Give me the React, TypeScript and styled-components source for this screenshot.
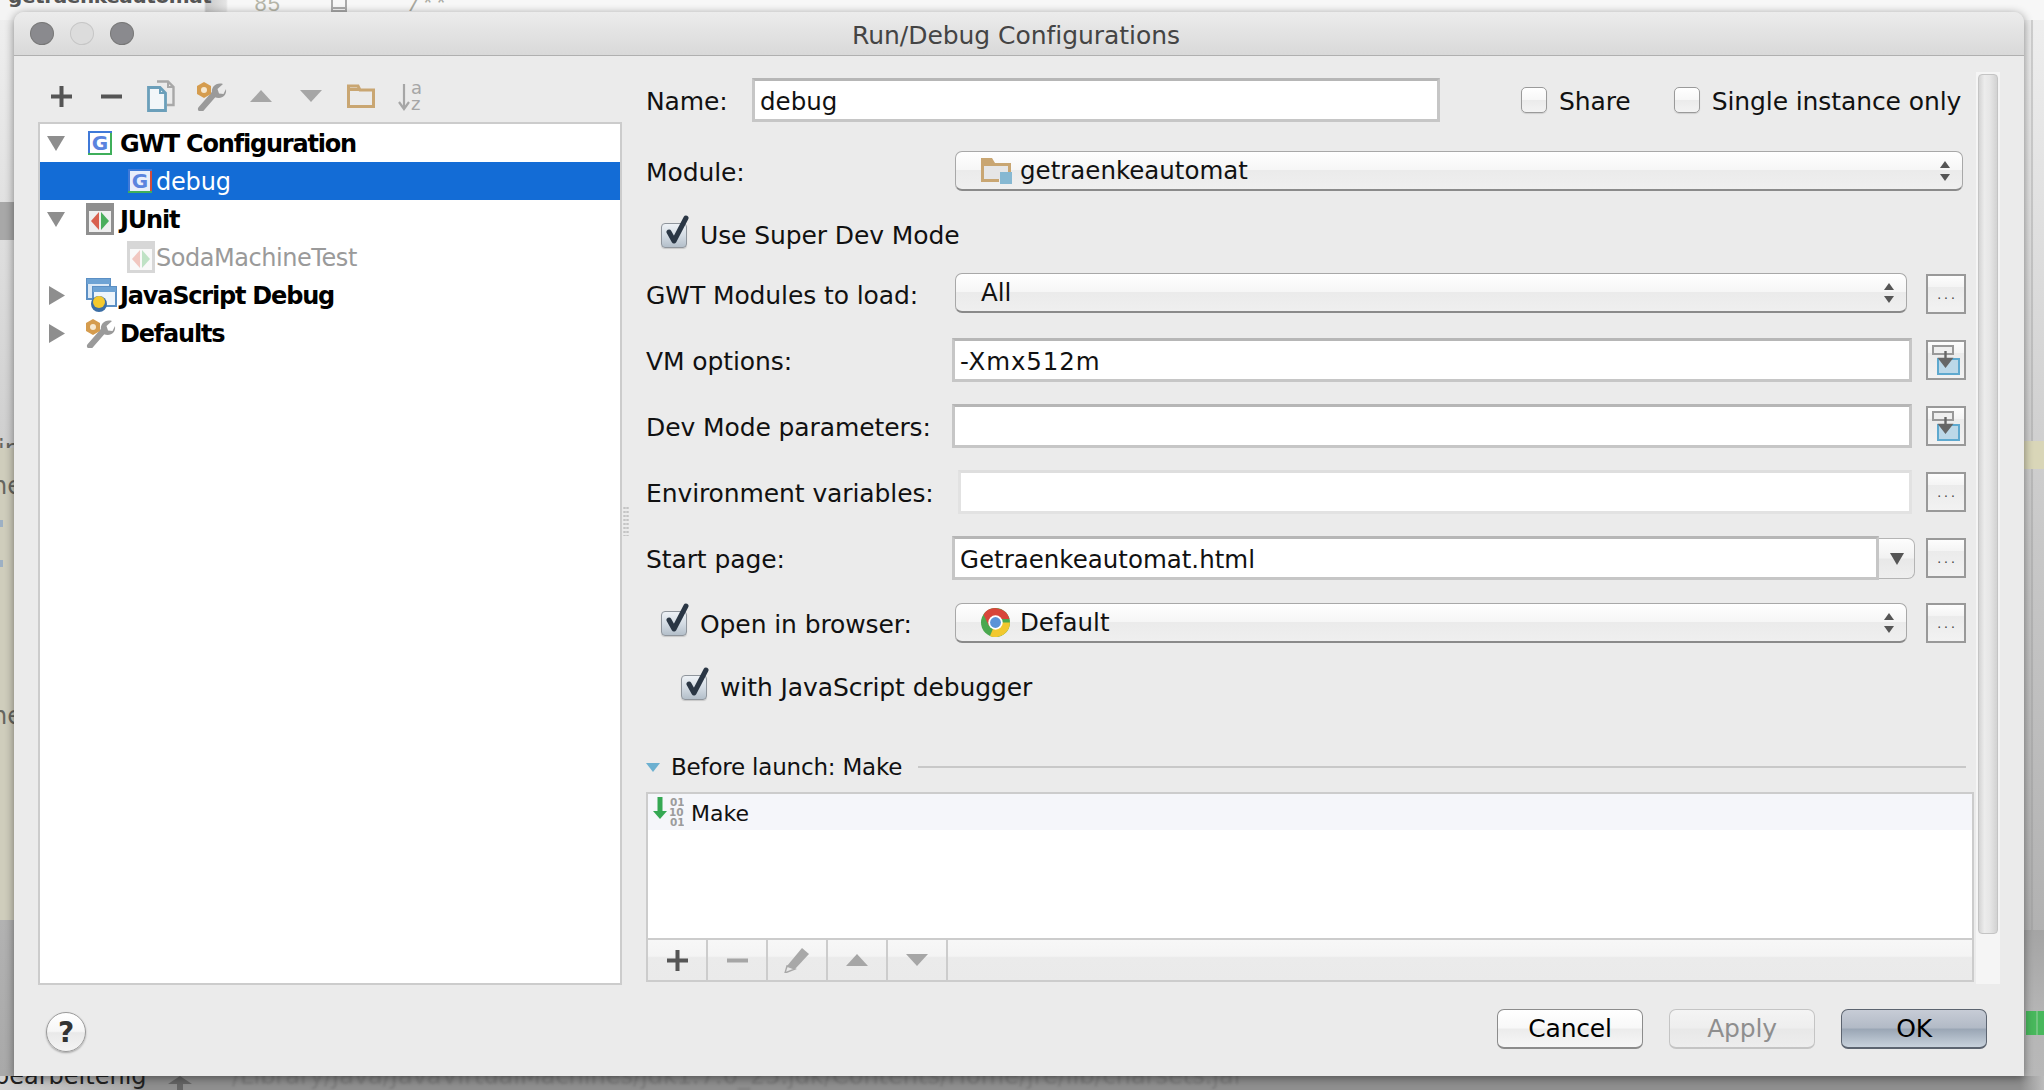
import React from "react";
import styled, { createGlobalStyle } from "styled-components";

const Global = createGlobalStyle`
  html, body { margin: 0; padding: 0; background: #9a9a9a; }
  * { box-sizing: border-box; }
`;

const Desktop = styled.div`
  position: relative;
  width: 2044px;
  height: 1090px;
  overflow: hidden;
  background: linear-gradient(180deg, #f0f0f0 0%, #c8c8c8 50%, #a8a8a8 100%);
  font-family: "DejaVu Sans", sans-serif;
  font-size: 25px;
  color: #111;
`;

/* The IDE window that lies behind the dialog */
const Backdrop = styled.div`
  width: 2044px;
  height: 1090px;
  display: grid;
  grid-template-columns: 14px 1fr 20px;
  grid-template-rows: 20px 1fr 14px;
`;
const TopEditor = styled.div`
  grid-column: 1 / 4;
  display: flex;
  align-items: flex-end;
  overflow: hidden;
  background: linear-gradient(90deg, #f4f4f4 0, #f4f4f4 204px, #c9c9c9 206px, #e4e4e4 226px, #f7f7f7 228px, #f7f7f7 100%);
`;
const TopFile = styled.span`
  width: 246px; flex: none; margin: 0 0 12px 8px;
  font-size: 20px; font-weight: 700; letter-spacing: -0.4px; color: #555; white-space: nowrap;
`;
const TopLine = styled.span`
  width: 77px; flex: none; margin-bottom: 2px;
  font-family: "Liberation Mono", monospace; font-size: 22px; color: #b5b5a8;
`;
const TopFold = styled.span`
  width: 16px; height: 16px; flex: none; margin: 0 61px 8px 0;
  border: 2px solid #aaa;
  background: linear-gradient(180deg, transparent 0, transparent 9px, #aaa 9px, #aaa 11px, transparent 11px);
`;
const TopComment = styled.span`
  margin-bottom: 2px;
  font-family: "Liberation Mono", monospace; font-size: 22px; color: #a9a9a0;
`;
const LeftDock = styled.div`
  display: flex; flex-direction: column; overflow: hidden;
`;
const LeftBand = styled.div`
  height: 38px; flex: none; margin-top: 182px; background: #a8a8a8;
`;
const LeftGap = styled.div`
  height: 195px; flex: none;
`;
const LeftFrag = styled.span<{ $shift: number }>`
  display: block; margin-left: ${(p) => p.$shift}px; font-size: 24px; line-height: 29px; color: #66665f; white-space: nowrap;
`;
const LeftTop = styled.div`
  height: 13px; flex: none;
`;
const LeftKhaki = styled.div`
  height: 472px; flex: none;
  background: #cfcdbc;
  padding-top: 24px;
  display: flex; flex-direction: column; align-items: flex-start;
`;
const LeftMarks = styled.div`
  display: flex; flex-direction: column; gap: 33px; padding: 19px 0 135px;
`;
const LeftMark = styled.span`
  width: 3px; height: 7px; background: #9db0c4;
`;
const RightDock = styled.div`
  grid-column: 3;
  display: flex; flex-direction: column;
`;
const RightUpper = styled.div`
  height: 910px; flex: none;
  padding-top: 421px;
  background: linear-gradient(90deg, transparent 7px, rgba(150,150,150,.35) 7px, rgba(150,150,150,.35) 9px, transparent 9px);
`;
const RightKhaki = styled.div`
  height: 28px; background: #d9d6b8;
`;
const RightLower = styled.div`
  flex: 1;
  padding: 81px 0 0 2px;
  background: linear-gradient(180deg, #a4a4a4 0, #b6b6b6 60%, #b8b8b8 100%);
`;
const RightGreen = styled.div`
  height: 24px;
  background: linear-gradient(90deg, #48b85c 0, #48b85c 10px, #9ad0a2 11px, #48b85c 12px);
`;
const BottomStrip = styled.div`
  grid-column: 1 / 4;
  display: flex;
  align-items: flex-end;
  overflow: hidden;
  background: linear-gradient(90deg, #d4d4d4 0, #a8a8a8 130px, #8f8f8f 140px, #8f8f8f 1800px, #8f8f8f 2020px, #bcbcbc 2044px);
`;
const BottomWord = styled.span`
  width: 174px; flex: none; margin-left: -6px; font-size: 24px; color: #222; white-space: nowrap;
`;
const BottomArrow = styled.svg`
  flex: none; margin-right: 40px;
`;
const BottomPath = styled.span`
  font-size: 24px; color: #7c7c7c; white-space: nowrap; filter: blur(1px);
`;

const Dialog = styled.section`
  position: absolute;
  left: 14px; top: 12px;
  width: 2010px; height: 1064px;
  background: #ebebeb;
  border-radius: 10px 10px 0 0;
  box-shadow: 0 2px 10px rgba(0, 0, 0, 0.45);
  display: flex;
  flex-direction: column;
`;
const TitleBar = styled.header`
  height: 44px;
  flex: none;
  border-bottom: 1px solid #b0b0b0;
  border-radius: 10px 10px 0 0;
  background: linear-gradient(180deg, #ececec 0%, #d9d9d9 100%);
  display: grid;
  grid-template-columns: 1fr auto 1fr;
  align-items: center;
`;
const Title = styled.h1`
  margin: 3px 6px 0 0; font-size: 25px; font-weight: 400; color: #444; letter-spacing: -0.05px;
`;
const Lights = styled.div`
  padding-left: 16px; display: flex; gap: 16px;
`;
const Light = styled.span<{ $dim?: boolean }>`
  width: 24px; height: 23px; border-radius: 50%;
  background: ${(p) => (p.$dim ? "#dcdcdc" : "#8a8a8e")};
  border: 1px solid ${(p) => (p.$dim ? "#c6c6c6" : "#777")};
`;

const Main = styled.div`
  flex: 1;
  display: grid;
  grid-template-columns: 584px 24px 1328px 26px;
  padding-left: 24px;
`;
const LeftPane = styled.div`
  display: flex; flex-direction: column; height: 929px;
`;
const TreeTools = styled.div`
  height: 66px;
  flex: none;
  display: flex;
  align-items: center;
  padding-top: 14px;
  margin-left: -2px;
`;
const ToolCell = styled.span`
  width: 50px; flex: none;
  display: flex; align-items: center; justify-content: center;
`;
const Tree = styled.div`
  flex: 1;
  background: #fff;
  border: 2px solid #cccccc;
`;
const TreeRow = styled.div<{ $sel?: boolean; $depth?: number }>`
  height: 38px;
  display: flex;
  align-items: center;
  padding-left: ${(p) => (p.$depth ? 87 : 0)}px;
  background: ${(p) => (p.$sel ? "#136cd6" : "transparent")};
`;
const Twist = styled.span`
  width: 45px; flex: none; padding-left: 7px; display: flex; align-items: center;
`;
const IconSlot = styled.span<{ $depth?: boolean; $inset?: number }>`
  width: ${(p) => (p.$depth ? 29 : 35)}px; flex: none; display: flex; align-items: center;
  padding-left: ${(p) => p.$inset ?? 0}px;
`;
const TreeText = styled.span<{ $sel?: boolean; $muted?: boolean; $bold?: boolean }>`
  font-size: 24px;
  padding-top: 1px;
  font-weight: ${(p) => (p.$bold ? 700 : 400)};
  color: ${(p) => (p.$sel ? "#fff" : p.$muted ? "#9a9a9a" : "#000")};
  letter-spacing: ${(p) => (p.$bold ? "-1.2px" : p.$muted ? "-0.45px" : "-0.2px")};
  white-space: nowrap;
`;

const Gutter = styled.div`
  display: flex; align-items: center; padding-left: 1px;
`;
const Splitter = styled.div`
  width: 6px; height: 30px;
  background-image: radial-gradient(circle, #c4c4c4 1px, transparent 1.4px);
  background-size: 3px 4px;
`;

const RightPane = styled.div`
  display: flex; flex-direction: column;
  gap: 22px;
  height: 926px;
  padding-top: 22px;
`;
const Row = styled.div<{ $h?: number }>`
  width: 1320px;
  height: ${(p) => p.$h ?? 44}px;
  flex: none;
  display: grid;
  grid-template-columns: 292px 1fr 40px;
  column-gap: 14px;
  align-items: center;
`;
const NameRow = styled.div`
  width: 1320px; height: 44px; flex: none; display: flex; align-items: center;
`;
const Label = styled.span<{ $w?: number }>`
  white-space: nowrap;
  letter-spacing: -0.1px;
  padding-top: 2px;
  ${(p) => (p.$w ? `width: ${p.$w}px; flex: none;` : "")}
`;
const CheckLabel = styled.span`
  white-space: nowrap;
  letter-spacing: -0.1px;
`;
const FieldText = styled.span<{ $wide?: boolean }>`
  white-space: nowrap;
  font-size: 24.5px;
  padding-top: 2px;
  letter-spacing: ${(p) => (p.$wide ? "0.9px" : "0")};
`;
const Field = styled.div<{ $faint?: boolean; $w?: number }>`
  height: 44px;
  background: #fff;
  border: 3px solid ${(p) => (p.$faint ? "#e2e2e2" : "#c6c6c6")};
  border-top-color: ${(p) => (p.$faint ? "#dedede" : "#b6b6b6")};
  margin-left: ${(p) => (p.$faint ? 6 : 0)}px;
  ${(p) => (p.$w ? `width: ${p.$w}px; flex: none; margin-right: 81px;` : "")}
  display: flex;
  align-items: center;
  padding-left: 5px;
`;
const StartField = styled.div`
  display: flex;
  margin-right: -3px;
`;
const WideField = styled(Field)`
  flex: 1;
`;
const DropButton = styled.div`
  width: 36px; height: 41px; margin-top: 2px; flex: none;
  border: 1px solid #b4b4b4; border-left: 0;
  border-radius: 0 7px 7px 0;
  background: linear-gradient(180deg, #fdfdfd 0, #f2f2f2 48%, #e8e8e8 52%, #eeeeee 100%);
  display: flex; align-items: center; justify-content: center;
`;
const Combo = styled.div<{ $span?: boolean; $lift?: boolean }>`
  height: 40px;
  margin: 0 ${(p) => (p.$span ? 3 : 5)}px ${(p) => (p.$lift ? 2 : 0)}px 3px;
  ${(p) => (p.$span ? "grid-column: 2 / 4;" : "")}
  border: 1px solid #a8a8a8;
  border-bottom: 2px solid #8a8a8a;
  border-radius: 7px;
  background: linear-gradient(180deg, #ffffff 0, #f6f6f6 48%, #ebebeb 50%, #efefef 100%);
  display: flex;
  align-items: center;
  padding: 0 11px 0 25px;
  gap: 9px;
`;
const ComboValue = styled.span`
  flex: 1;
  font-size: 24.5px;
`;
const Square = styled.div`
  width: 40px; height: 40px;
  border: 2px solid #999;
  background: linear-gradient(180deg, #fdfdfd 0, #f4f4f4 30%, #ebebeb 32%, #f2f2f2 100%);
  display: flex; align-items: center; justify-content: center;
`;
const Dots = styled.span`
  font-size: 14px; letter-spacing: 3px; color: #444; font-family: "Liberation Sans", sans-serif;
  padding-left: 3px; line-height: 1;
`;
const CheckRow = styled.div<{ $indent: number; $h: number }>`
  display: flex; align-items: center; flex: none;
  height: ${(p) => p.$h}px;
  padding-left: ${(p) => p.$indent}px;
  gap: 13px;
`;
const CheckCell = styled.div`
  display: flex; align-items: center; padding-left: 15px; gap: 13px;
`;
const CheckBoxWrap = styled.span`
  position: relative;
  width: 26px; height: 25px; flex: none;
  border: 1px solid #8f959c;
  border-radius: 4px;
  background: linear-gradient(180deg, #eef2f6 0, #d4dce4 50%, #b4bfca 100%);
  box-shadow: 0 1px 1px rgba(0,0,0,.15);
`;
const CheckMark = styled.svg`
  position: absolute; left: 1px; top: -9px;
`;
const EmptyBox = styled.span`
  width: 26px; height: 26px; flex: none;
  border: 1px solid #9a9a9a;
  border-radius: 5px;
  background: linear-gradient(180deg, #fff 0, #f7f7f7 50%, #ebebeb 52%, #f3f3f3 100%);
  box-shadow: 0 1px 1px rgba(0,0,0,.12);
`;
const Options = styled.div`
  display: flex; gap: 43px;
`;
const Option = styled.label`
  display: flex; align-items: center; gap: 12px;
`;

const BeforeSection = styled.section`
  margin-top: auto;
  display: flex; flex-direction: column; gap: 13px;
`;
const BeforeHead = styled.div`
  width: 1320px;
  height: 24px;
  flex: none;
  display: flex;
  align-items: center;
`;
const BeforeText = styled.span`
  margin-left: 11px; font-size: 23px; white-space: nowrap; letter-spacing: -0.2px;
`;
const BeforeRule = styled.span`
  flex: 1; height: 2px; background: #c8c8c8; margin-left: 16px;
`;
const MakePanel = styled.div`
  height: 190px;
  flex: none;
  border: 2px solid #cccccc;
  background: #fff;
  display: flex;
  flex-direction: column;
`;
const MakeRow = styled.div`
  height: 36px; background: #f5f6fa; display: flex; align-items: center; padding-left: 5px; flex: none;
`;
const MakeText = styled.span`
  margin-left: 7px; font-size: 22px; padding-top: 2px;
`;
const MakeSpace = styled.div`
  flex: 1;
`;
const MakeTools = styled.div`
  height: 42px; flex: none;
  border-top: 2px solid #cccccc;
  background: linear-gradient(180deg, #f7f7f7 0, #f4f4f4 40%, #ebebeb 44%, #eaeaea 100%);
  display: flex;
`;
const MakeTool = styled.span`
  width: 60px; flex: none;
  border-right: 2px solid #cccccc;
  display: flex; align-items: center; justify-content: center;
`;

const Track = styled.div`
  margin: 16px 0 0 2px;
  width: 24px; height: 912px;
  background: #f5f5f5;
  padding: 2px 2px 50px;
  display: flex;
`;
const Thumb = styled.div`
  flex: 1;
  border: 1px solid #c4c4c4;
  border-radius: 4px;
  background: linear-gradient(90deg, #d4d4d4 0, #ececec 30%, #e6e6e6 60%, #d2d2d2 100%);
`;

const Footer = styled.footer`
  height: 91px;
  flex: none;
  display: flex;
  justify-content: space-between;
  align-items: flex-start;
  padding: 24px 37px 0 32px;
`;
const Help = styled.button`
  width: 40px; height: 40px; margin-top: 3px; padding: 0;
  border: 1px solid #9a9a9a;
  border-radius: 50%;
  font-family: "DejaVu Sans", sans-serif;
  font-size: 28px; font-weight: 700; color: #333;
  background: linear-gradient(180deg, #ffffff 0, #f6f6f6 48%, #e9e9e9 52%, #f4f4f4 100%);
  box-shadow: 0 1px 2px rgba(0,0,0,.3);
`;
const Buttons = styled.div`
  display: flex; gap: 26px;
`;
const Push = styled.button<{ $kind?: "primary" | "off" }>`
  width: 146px; height: 40px; padding: 0;
  font-family: "DejaVu Sans", sans-serif; font-size: 25px; letter-spacing: -0.2px;
  border-radius: 7px;
  color: ${(p) => (p.$kind === "off" ? "#8e8e8e" : "#000")};
  border: 1px solid ${(p) => (p.$kind === "off" ? "#c4c4c4" : p.$kind === "primary" ? "#5c6470" : "#8c8c8c")};
  border-bottom-width: 2px;
  background: ${(p) =>
    p.$kind === "primary"
      ? "linear-gradient(180deg, #c7ccd6 0, #b2bac6 48%, #9aa6b5 52%, #c8d2dc 100%)"
      : p.$kind === "off"
      ? "linear-gradient(180deg, #f4f4f4 0, #eeeeee 48%, #e8e8e8 52%, #ededed 100%)"
      : "linear-gradient(180deg, #ffffff 0, #f8f8f8 48%, #ececec 52%, #f6f6f6 100%)"};
`;

/* ---------- icons ---------- */
const Down = ({ w = 18, h = 15, c = "#8e8e8e" }: { w?: number; h?: number; c?: string }) => (
  <svg width={w} height={h} viewBox="0 0 18 15" preserveAspectRatio="none"><path d="M0 0H18L9 15Z" fill={c} /></svg>
);
const Right = () => (
  <svg width={16} height={19} viewBox="0 0 16 19" style={{ marginLeft: 2 }}><path d="M0 0L16 9.5L0 19Z" fill="#8e8e8e" /></svg>
);
const Up = ({ w = 22, h = 12, c = "#a6a6a6" }: { w?: number; h?: number; c?: string }) => (
  <svg width={w} height={h} viewBox="0 0 22 12"><path d="M11 0L22 12H0Z" fill={c} /></svg>
);
const Plus = ({ c = "#555" }: { c?: string }) => (
  <svg width={21} height={21} viewBox="0 0 21 21"><path d="M8.5 0h4v8.5H21v4h-8.5V21h-4v-8.5H0v-4h8.5Z" fill={c} /></svg>
);
const Minus = ({ c = "#555" }: { c?: string }) => (
  <svg width={21} height={5} viewBox="0 0 21 5"><rect width={21} height={4} y={0.5} fill={c} /></svg>
);
const Copy = () => (
  <svg width={28} height={32} viewBox="0 0 28 32" fill="none">
    <path d="M10 1.5H21L26.5 7V25H20" stroke="#a8a8a8" strokeWidth={2.4} />
    <path d="M21 1.5V7H26.5" stroke="#a8a8a8" strokeWidth={2} />
    <path d="M1.5 7.5H13L18.5 13V30.5H1.5Z" fill="#f2f6f9" stroke="#6b9fba" strokeWidth={2.8} />
    <path d="M13 7.5V13H18.5" stroke="#6b9fba" strokeWidth={2} />
  </svg>
);
const Wrench = () => (
  <svg width={31} height={30} viewBox="0 0 31 30" fill="none">
    <path d="M5 28L19 12" stroke="#9a9a9a" strokeWidth={6} strokeLinecap="round" />
    <path d="M16 12C15 6 20 1 27 3L21.5 8L23 12.5L27.5 13L30 8C31 15 25 19 18.5 16Z" fill="#9a9a9a" />
    <path d="M1 5L8 1L15 5V13L8 17L1 13Z" fill="#d59c4e" />
    <circle cx={8} cy={9} r={3} fill="#f6e8d0" />
  </svg>
);
const FolderTool = () => (
  <svg width={28} height={24} viewBox="0 0 28 24" fill="none">
    <path d="M1.5 2H11L13 6H26.5V22.5H1.5Z" stroke="#c9a672" strokeWidth={3} />
    <path d="M1 4H12V7H1Z" fill="#c9a672" />
  </svg>
);
const Sort = () => (
  <svg width={27} height={29} viewBox="0 0 27 29" fill="none">
    <path d="M6 2V26M1 20L6 27L11 20" stroke="#a6a6a6" strokeWidth={2.2} />
    <text x={13} y={12} fontSize={18} fill="#a6a6a6" fontFamily="DejaVu Sans">a</text>
    <text x={13} y={28} fontSize={18} fill="#a6a6a6" fontFamily="DejaVu Sans">z</text>
  </svg>
);
const GIcon = ({ sel }: { sel?: boolean }) => (
  <svg width={24} height={24} viewBox="0 0 24 24">
    <rect x={0} y={0} width={24} height={24} fill={sel ? "#e8eefb" : "#fff"} />
    <path d="M0 0H24V2H2V22H0Z" fill="#3f79d8" />
    <path d="M2 22H24V24H0V22Z" fill="#3faf5a" />
    <path d="M22 2H24V22H22Z" fill={sel ? "#d34c3c" : "#3faf5a"} />
    <text x={12} y={19} textAnchor="middle" fontSize={20} fontWeight={700} fill="#5b84de" fontFamily="DejaVu Sans">G</text>
  </svg>
);
const JUnitIcon = ({ muted }: { muted?: boolean }) => (
  <svg width={28} height={32} viewBox="0 0 28 32" opacity={muted ? 0.35 : 1}>
    <rect x={0} y={0} width={28} height={32} fill="#8f8f8f" />
    <rect x={3} y={8} width={22} height={21} fill="#efefef" />
    <path d="M13 9V27L5 18Z" fill="#d8604e" />
    <path d="M15 9V27L23 18Z" fill="#4aae5c" />
  </svg>
);
const JsIcon = () => (
  <svg width={31} height={34} viewBox="0 0 31 34">
    <rect x={1} y={1} width={23} height={20} fill="#dbe9f6" stroke="#5b8fc4" strokeWidth={2} />
    <rect x={1} y={1} width={23} height={5} fill="#6ea3d4" />
    <rect x={7} y={9} width={23} height={19} fill="#eef5fb" stroke="#5b8fc4" strokeWidth={2} />
    <rect x={7} y={9} width={23} height={5} fill="#6ea3d4" />
    <circle cx={13} cy={26} r={8} fill="#3b6ea5" />
    <circle cx={13} cy={24} r={6} fill="#f4c92e" />
  </svg>
);
const ModuleFolder = () => (
  <svg width={31} height={26} viewBox="0 0 31 26" style={{ marginRight: -1 }}>
    <path d="M0 0H11L14 5H30V20H18V24H0Z" fill="#c9a672" />
    <rect x={3} y={8} width={24} height={13} fill="#e6e6e6" />
    <rect x={19} y={14} width={12} height={12} fill="#86b8d2" />
  </svg>
);
const Chrome = () => (
  <svg width={29} height={29} viewBox="0 0 29 29" style={{ marginRight: 1 }}>
    <circle cx={14.5} cy={14.5} r={14.5} fill="#4aa84f" />
    <path d="M14.5 14.5L29 14.5A14.5 14.5 0 0 1 9 28Z" fill="#f2c82e" />
    <path d="M2.5 6.5A14.5 14.5 0 0 1 28.5 11L14.5 11L8 18Z" fill="#d8453a" />
    <circle cx={14.5} cy={14.5} r={7.2} fill="#fff" />
    <circle cx={14.5} cy={14.5} r={5.4} fill="#5a93d8" />
  </svg>
);
const Stepper = () => (
  <svg width={12} height={20} viewBox="0 0 12 20" style={{ flex: "none" }}>
    <path d="M6 0L11 7H1Z" fill="#555" /><path d="M1 13H11L6 20Z" fill="#555" />
  </svg>
);
const InsertMacro = () => (
  <svg width={28} height={30} viewBox="0 0 28 30" fill="none">
    <rect x={6} y={14} width={21} height={15} fill="#bcd8e8" stroke="#5ea9cf" strokeWidth={2} />
    <rect x={1} y={1} width={20} height={8} fill="#efefef" stroke="#999" strokeWidth={2} />
    <path d="M13.5 6V15M8 14H19L13.5 21Z" stroke="#666" fill="#666" strokeWidth={2.4} />
  </svg>
);
const Checked = () => (
  <CheckBoxWrap>
    <CheckMark width={27} height={32} viewBox="0 0 27 32" fill="none">
      <path d="M6 17L11 26L23 3" stroke="#2a3644" strokeWidth={5} strokeLinecap="round" strokeLinejoin="round" />
    </CheckMark>
  </CheckBoxWrap>
);
const MakeIcon = () => (
  <svg width={31} height={30} viewBox="0 0 31 30">
    <path d="M4.5 0H9.5V14H14L7 22L0 14H4.5Z" fill="#35a853" />
    <g fontFamily="DejaVu Sans" fontSize={10.5} fontWeight={700} fill="#9c9c9c">
      <text x={17} y={9}>01</text>
      <text x={16} y={19}>10</text>
      <text x={17} y={29}>01</text>
    </g>
  </svg>
);
const Pencil = () => (
  <svg width={26} height={26} viewBox="0 0 26 26">
    <path d="M18 1L25 7L11 22L3 19Z" fill="#a8a8a8" />
    <path d="M3 19L11 22L1 26Z" fill="#e8e8e8" stroke="#a8a8a8" strokeWidth={1.4} />
  </svg>
);

export default function App() {
  return (
    <Desktop>
      <Global />
      <Backdrop>
        <TopEditor>
          <TopFile>getraenkeautomat</TopFile>
          <TopLine>85</TopLine>
          <TopFold />
          <TopComment>/**</TopComment>
        </TopEditor>
        <LeftDock>
          <LeftBand />
          <LeftGap />
          <LeftTop><LeftFrag $shift={-2}>ir</LeftFrag></LeftTop>
          <LeftKhaki>
            <LeftFrag $shift={-8}>ne</LeftFrag>
            <LeftMarks>
              <LeftMark />
              <LeftMark />
            </LeftMarks>
            <LeftFrag $shift={-8}>ne</LeftFrag>
          </LeftKhaki>
        </LeftDock>
        <RightDock>
          <RightUpper><RightKhaki /></RightUpper>
          <RightLower><RightGreen /></RightLower>
        </RightDock>
        <BottomStrip>
          <BottomWord>bearbeitenig</BottomWord>
          <BottomArrow width={24} height={14} viewBox="0 0 24 14"><path d="M12 0L24 8H15V14H9V8H0Z" fill="#666" /></BottomArrow>
          <BottomPath>/Library/Java/JavaVirtualMachines/jdk1.7.0_25.jdk/Contents/Home/jre/lib/charsets.jar</BottomPath>
        </BottomStrip>
      </Backdrop>

      <Dialog>
        <TitleBar>
          <Lights>
            <Light />
            <Light $dim />
            <Light />
          </Lights>
          <Title>Run/Debug Configurations</Title>
        </TitleBar>

        <Main>
          <LeftPane>
            <TreeTools>
              <ToolCell><Plus /></ToolCell>
              <ToolCell><Minus /></ToolCell>
              <ToolCell><Copy /></ToolCell>
              <ToolCell><Wrench /></ToolCell>
              <ToolCell><Up /></ToolCell>
              <ToolCell><Down w={22} h={12} c="#a6a6a6" /></ToolCell>
              <ToolCell><FolderTool /></ToolCell>
              <ToolCell><Sort /></ToolCell>
            </TreeTools>
            <Tree>
              <TreeRow>
                <Twist><Down /></Twist>
                <IconSlot $inset={3}><GIcon /></IconSlot>
                <TreeText $bold>GWT Configuration</TreeText>
              </TreeRow>
              <TreeRow $sel $depth={1}>
                <IconSlot $depth $inset={1}><GIcon sel /></IconSlot>
                <TreeText $sel>debug</TreeText>
              </TreeRow>
              <TreeRow>
                <Twist><Down /></Twist>
                <IconSlot $inset={1}><JUnitIcon /></IconSlot>
                <TreeText $bold>JUnit</TreeText>
              </TreeRow>
              <TreeRow $depth={1}>
                <IconSlot $depth><JUnitIcon muted /></IconSlot>
                <TreeText $muted>SodaMachineTest</TreeText>
              </TreeRow>
              <TreeRow>
                <Twist><Right /></Twist>
                <IconSlot $inset={1}><JsIcon /></IconSlot>
                <TreeText $bold>JavaScript Debug</TreeText>
              </TreeRow>
              <TreeRow>
                <Twist><Right /></Twist>
                <IconSlot><Wrench /></IconSlot>
                <TreeText $bold>Defaults</TreeText>
              </TreeRow>
            </Tree>
          </LeftPane>

          <Gutter><Splitter /></Gutter>

          <RightPane>
            <NameRow>
              <Label $w={106}>Name:</Label>
              <Field $w={688}><FieldText>debug</FieldText></Field>
              <Options>
                <Option><EmptyBox /><Label>Share</Label></Option>
                <Option><EmptyBox /><Label>Single instance only</Label></Option>
              </Options>
            </NameRow>

            <Row $h={54}>
              <Label>Module:</Label>
              <Combo $span>
                <ModuleFolder />
                <ComboValue>getraenkeautomat</ComboValue>
                <Stepper />
              </Combo>
            </Row>

            <CheckRow $indent={15} $h={30}>
              <Checked />
              <CheckLabel>Use Super Dev Mode</CheckLabel>
            </CheckRow>

            <Row>
              <Label>GWT Modules to load:</Label>
              <Combo $lift>
                <ComboValue>All</ComboValue>
                <Stepper />
              </Combo>
              <Square><Dots>...</Dots></Square>
            </Row>

            <Row>
              <Label>VM options:</Label>
              <Field><FieldText $wide>-Xmx512m</FieldText></Field>
              <Square><InsertMacro /></Square>
            </Row>

            <Row>
              <Label>Dev Mode parameters:</Label>
              <Field />
              <Square><InsertMacro /></Square>
            </Row>

            <Row>
              <Label>Environment variables:</Label>
              <Field $faint />
              <Square><Dots>...</Dots></Square>
            </Row>

            <Row>
              <Label>Start page:</Label>
              <StartField>
                <WideField><FieldText>Getraenkeautomat.html</FieldText></WideField>
                <DropButton><Down w={14} h={12} c="#555" /></DropButton>
              </StartField>
              <Square><Dots>...</Dots></Square>
            </Row>

            <Row $h={42}>
              <CheckCell>
                <Checked />
                <Label>Open in browser:</Label>
              </CheckCell>
              <Combo>
                <Chrome />
                <ComboValue>Default</ComboValue>
                <Stepper />
              </Combo>
              <Square><Dots>...</Dots></Square>
            </Row>

            <CheckRow $indent={35} $h={42}>
              <Checked />
              <CheckLabel>with JavaScript debugger</CheckLabel>
            </CheckRow>

            <BeforeSection>
              <BeforeHead>
                <Down w={14} h={9} c="#6cb0d0" />
                <BeforeText>Before launch: Make</BeforeText>
                <BeforeRule />
              </BeforeHead>
              <MakePanel>
                <MakeRow>
                  <MakeIcon />
                  <MakeText>Make</MakeText>
                </MakeRow>
                <MakeSpace />
                <MakeTools>
                  <MakeTool><Plus /></MakeTool>
                  <MakeTool><Minus c="#a6a6a6" /></MakeTool>
                  <MakeTool><Pencil /></MakeTool>
                  <MakeTool><Up /></MakeTool>
                  <MakeTool><Down w={22} h={12} c="#a6a6a6" /></MakeTool>
                </MakeTools>
              </MakePanel>
            </BeforeSection>
          </RightPane>

          <Track><Thumb /></Track>
        </Main>

        <Footer>
          <Help>?</Help>
          <Buttons>
            <Push>Cancel</Push>
            <Push $kind="off">Apply</Push>
            <Push $kind="primary">OK</Push>
          </Buttons>
        </Footer>
      </Dialog>
    </Desktop>
  );
}
